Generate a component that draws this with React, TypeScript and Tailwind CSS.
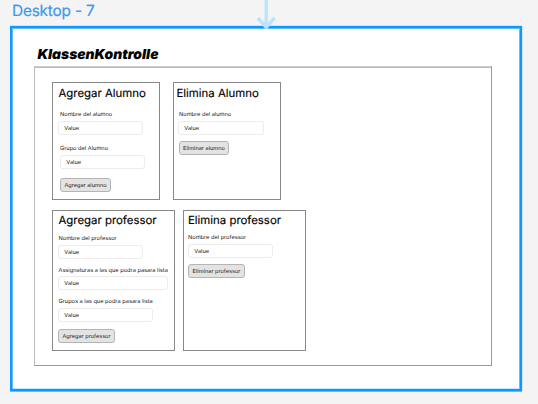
type BlockProps = { className: string; children?: string };

function Title({ className, children }: BlockProps) {
  return <h2 className={`h-4 text-[11.4px] leading-4 text-black [-webkit-text-stroke:0.15px_#000] ${className}`}>{children}</h2>;
}

function Label({ className, children }: BlockProps) {
  return <div className={`h-2 text-[5.65px] leading-[10px] text-[#222] ${className}`}>{children}</div>;
}

function Field({ className }: BlockProps) {
  return (
    <div className={`h-[14px] rounded-[3px] border border-[#ececec] bg-white pl-[5.3px] text-[5.65px] leading-[14px] text-[#222] ${className}`}>
      Value
    </div>
  );
}

function Button({ className, children }: BlockProps) {
  return (
    <button className={`block h-[14px] rounded-[3px] border border-[#b4b4b4] bg-[#e3e3e3] text-center text-[5.6px] leading-3 text-[#222] [text-rendering:inherit] ${className}`}>
      <span className="block h-3 leading-[14px]">{children}</span>
    </button>
  );
}

export default function App() {
  return (
    <div className="h-[404px] w-[538px] overflow-hidden whitespace-nowrap bg-[#f4f4f4] font-['Inter',sans-serif] [text-rendering:geometricPrecision]">
      <div className="h-[26px] pl-[12px] text-[15.4px] leading-[21px] tracking-[-0.2px] text-[#3f98ec] [-webkit-text-stroke:0.2px_#3f98ec]">
        Desktop - 7
      </div>
      <div className="ml-[10px] h-[365px] w-[512px] border-2 border-[#0d99ff] bg-white shadow-[0_1px_0_0_#62bcff,0_-1px_0_0_#cfe6f7,1px_0_0_0_#cfe6f7,inset_1px_1px_0_0_#62bcff,inset_-1px_0_0_0_#62bcff,inset_0_-1px_0_0_#c4e5ff]">
        <h1 className="ml-[25.5px] mt-[17px] h-[21px] text-[13.85px] font-black italic leading-[21px] text-black">
          KlassenKontrolle
        </h1>
        <main className="ml-[22px] h-[300px] w-[458px] border border-b-[#999] border-l-[#bbb] border-r-[#999] border-t-[#ccc] pl-[17px] pt-[15px] shadow-[inset_0_1px_0_0_#bbb]">
          <div className="flex gap-[13px]">
            <section className="h-[118px] w-[108px] border border-[#888]">
              <Title className="ml-[5.5px] mt-[2px]">Agregar Alumno</Title>
              <Label className="ml-[7px] mt-[9px]">Nombre del alumno</Label>
              <Field className="ml-[5px] mt-[3px] w-[85px]" />
              <Label className="ml-[7px] mt-[9px]">Grupo del Alumno</Label>
              <Field className="ml-[7px] mt-[3px] w-[85px]" />
              <Button className="ml-[7px] mt-[9px] w-[51px]">Agregar alumno</Button>
            </section>
            <section className="h-[118px] w-[108px] border border-[#888]">
              <Title className="ml-[2.5px] mt-[2px]">Elimina Alumno</Title>
              <Label className="ml-[5px] mt-[9px]">Nombre del alumno</Label>
              <Field className="ml-[4px] mt-[3px] w-[86px]" />
              <Button className="ml-[5px] mt-[6px] w-[50px]">Eliminar alumno</Button>
            </section>
          </div>
          <div className="mt-[10px] flex gap-[8px]">
            <section className="h-[141px] w-[123px] border border-[#888]">
              <Title className="ml-[5.5px] mt-px">Agregar professor</Title>
              <Label className="ml-[5.5px] mt-[6px]">Nombre del professor</Label>
              <Field className="ml-[5px] mt-[3px] w-[85px]" />
              <Label className="ml-[5.5px] mt-[7px]">Assignaturas a las que podra pasara lista</Label>
              <Field className="ml-[5px] mt-[2px] w-[110px]" />
              <Label className="ml-[5.5px] mt-[7px]">Grupos a las que podra pasara lista</Label>
              <Field className="ml-[5px] mt-[3px] w-[95px]" />
              <Button className="ml-[5px] mt-[7px] w-[57px]">Agregar professor</Button>
            </section>
            <section className="h-[141px] w-[123px] border border-[#888]">
              <Title className="ml-[4px] mt-px">Elimina professor</Title>
              <Label className="ml-[4px] mt-[5px]">Nombre del professor</Label>
              <Field className="ml-[4px] mt-[3px] w-[85px]" />
              <Button className="ml-[4px] mt-[6px] w-[57px]">Eliminar professor</Button>
            </section>
          </div>
        </main>
      </div>
      <svg className="absolute left-[254px] top-0" width="24" height="30" viewBox="0 0 24 30" fill="none" stroke="#bde3ff" strokeWidth="3.4">
        <path d="M12.2 0V27M3.8 18L12.2 27.2L20.6 18" />
      </svg>
    </div>
  );
}
